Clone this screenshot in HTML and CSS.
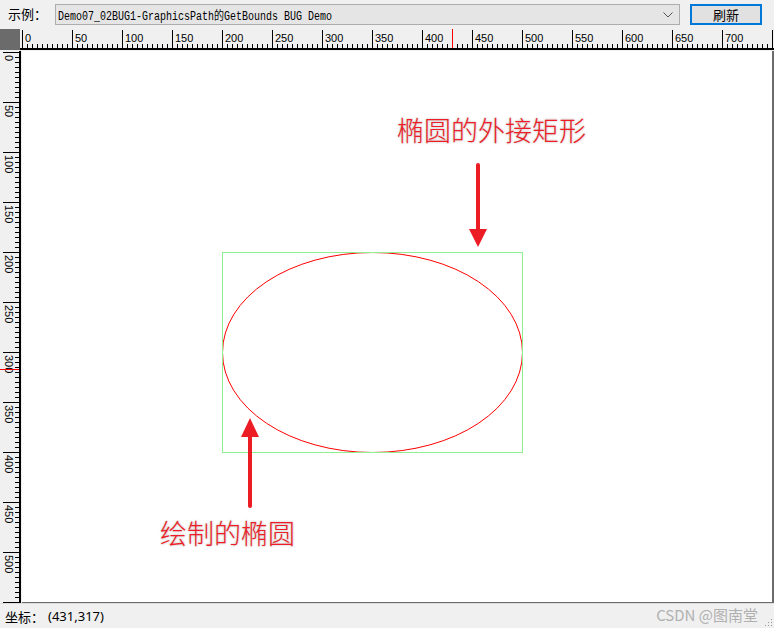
FILE: index.html
```html
<!DOCTYPE html>
<html lang="zh-CN">
<head>
<meta charset="utf-8">
<title>Demo07_02BUG1</title>
<link rel="stylesheet" href="styles.css">
</head>
<body>
<div class="app">
  <div class="toolbar">
    <span class="label">示例：</span>
    <div class="combo">
      <span class="combo-text">Demo07_02BUG1-GraphicsPath的GetBounds BUG Demo</span>
      <svg class="chev" width="10" height="6" viewBox="0 0 10 6"><path d="M0.5 0.5 L5 5 L9.5 0.5" fill="none" stroke="#555" stroke-width="1"/></svg>
    </div>
    <button class="btn">刷新</button>
  </div>

  <div class="ruler-row">
    <div class="corner"></div>
    <svg class="hruler" width="754" height="22" viewBox="0 0 754 22">
      <defs>
        <pattern id="hs" x="2" y="0" width="5" height="22" patternUnits="userSpaceOnUse">
          <rect x="0" y="15" width="1" height="4" fill="#000"/>
        </pattern>
        <pattern id="hm" x="2" y="0" width="50" height="22" patternUnits="userSpaceOnUse">
          <rect x="0" y="1" width="1" height="18" fill="#000"/>
        </pattern>
      </defs>
      <rect x="2" y="0" width="751" height="22" fill="url(#hs)"/>
      <rect x="2" y="0" width="751" height="22" fill="url(#hm)"/>
      <rect x="0" y="19" width="754" height="2" fill="#000"/>
      <g class="rtext">
        <text x="5" y="13">0</text>
        <text x="55" y="13">50</text>
        <text x="105" y="13">100</text>
        <text x="155" y="13">150</text>
        <text x="205" y="13">200</text>
        <text x="255" y="13">250</text>
        <text x="305" y="13">300</text>
        <text x="355" y="13">350</text>
        <text x="405" y="13">400</text>
        <text x="455" y="13">450</text>
        <text x="505" y="13">500</text>
        <text x="555" y="13">550</text>
        <text x="605" y="13">600</text>
        <text x="655" y="13">650</text>
        <text x="705" y="13">700</text>
      </g>
      <rect x="432" y="0" width="1" height="19" fill="#ff0000"/>
    </svg>
  </div>

  <div class="main">
    <svg class="vruler" width="22" height="552" viewBox="0 0 22 552">
      <defs>
        <pattern id="vs" x="0" y="1" width="22" height="5" patternUnits="userSpaceOnUse">
          <rect x="15" y="0" width="4" height="1" fill="#000"/>
        </pattern>
        <pattern id="vm" x="0" y="1" width="22" height="50" patternUnits="userSpaceOnUse">
          <rect x="3" y="0" width="16" height="1" fill="#000"/>
        </pattern>
      </defs>
      <rect x="0" y="1" width="22" height="551" fill="url(#vs)"/>
      <rect x="0" y="1" width="22" height="551" fill="url(#vm)"/>
      <rect x="19" y="0" width="2" height="552" fill="#000"/>
      <g class="rtext">
        <text transform="translate(5 4) rotate(90)">0</text>
        <text transform="translate(5 54) rotate(90)">50</text>
        <text transform="translate(5 104) rotate(90)">100</text>
        <text transform="translate(5 154) rotate(90)">150</text>
        <text transform="translate(5 204) rotate(90)">200</text>
        <text transform="translate(5 254) rotate(90)">250</text>
        <text transform="translate(5 304) rotate(90)">300</text>
        <text transform="translate(5 354) rotate(90)">350</text>
        <text transform="translate(5 404) rotate(90)">400</text>
        <text transform="translate(5 454) rotate(90)">450</text>
        <text transform="translate(5 504) rotate(90)">500</text>
      </g>
      <rect x="0" y="318" width="19" height="1" fill="#ff0000"/>
    </svg>

    <div class="canvas">
      <svg class="drawing" width="750" height="551" viewBox="0 0 750 551">
        <ellipse cx="350.5" cy="301.5" rx="150" ry="100" fill="none" stroke="#ff0000" stroke-width="1"/>
        <rect x="200.5" y="201.5" width="300" height="200" fill="none" stroke="#90ee90" stroke-width="1"/>
        <path d="M150 201.5 H180 M320 201.5 H375 M320 401.5 H375 M200.5 270 V330 M500.5 270 V330" stroke="none"/>
        <line x1="456" y1="114" x2="456" y2="182" stroke="#ec1c24" stroke-width="4" stroke-linecap="round"/>
        <path d="M447 178 L465 178 L456 196 Z" fill="#ec1c24"/>
        <line x1="228" y1="455" x2="228" y2="382" stroke="#ec1c24" stroke-width="4" stroke-linecap="round"/>
        <path d="M219 386 L237 386 L228 367 Z" fill="#ec1c24"/>
      </svg>
      <div class="note note-rect">椭圆的外接矩形</div>
      <div class="note note-ellipse">绘制的椭圆</div>
    </div>
  </div>

  <div class="status">
    <span class="st-label">坐标：</span>
    <span class="st-value">(431,317)</span>
    <span class="watermark">CSDN @图南堂</span>
    <svg class="grip" width="10" height="10" viewBox="0 0 10 10">
      <rect x="8" y="2" width="1" height="1" fill="#999"/>
      <rect x="5" y="5" width="1" height="1" fill="#999"/>
      <rect x="8" y="5" width="1" height="1" fill="#999"/>
      <rect x="2" y="8" width="1" height="1" fill="#999"/>
      <rect x="5" y="8" width="1" height="1" fill="#999"/>
      <rect x="8" y="8" width="1" height="1" fill="#999"/>
    </svg>
  </div>
</div>
</body>
</html>
```

FILE: styles.css
```css
html, body {
  margin: 0;
  padding: 0;
}
body {
  width: 774px;
  height: 628px;
  overflow: hidden;
  background: #f0f0f0;
  font-family: "Noto Sans CJK SC", "Noto Sans", sans-serif;
  font-size: 13px;
  color: #000;
}
.app {
  display: flex;
  flex-direction: column;
  width: 774px;
  height: 628px;
}
.toolbar {
  height: 29px;
  display: flex;
  align-items: flex-start;
  box-sizing: border-box;
  padding-top: 4px;
}
.label {
  width: 47px;
  padding-left: 8px;
  line-height: 20px;
  font-size: 13px;
  white-space: nowrap;
  overflow: hidden;
}
.combo {
  width: 625px;
  height: 21px;
  box-sizing: border-box;
  border: 1px solid #adadad;
  background: #e5e5e5;
  display: flex;
  align-items: center;
  justify-content: space-between;
  padding: 0 6px 0 2px;
}
.combo-text {
  font-family: "Liberation Mono", "Noto Sans CJK SC", monospace;
  font-size: 10px;
  color: #000;
  white-space: nowrap;
  display: inline-block;
  transform: scaleY(1.2);
}
.chev {
  display: block;
}
.btn {
  margin-left: 10px;
  width: 72px;
  height: 21px;
  box-sizing: border-box;
  border: 2px solid #0078d7;
  background: #e1e1e1;
  font-family: "Noto Sans CJK SC", sans-serif;
  font-size: 13px;
  line-height: 15px;
  padding: 0;
  color: #000;
}
.ruler-row {
  display: flex;
  height: 22px;
}
.corner {
  width: 20px;
  height: 21px;
  background: #6b6b6b;
}
.hruler, .vruler {
  display: block;
}
.rtext text {
  font-family: "Liberation Sans", Arial, sans-serif;
  font-size: 11px;
  fill: #000;
}
.main {
  display: flex;
  height: 552px;
}
.canvas {
  position: relative;
  width: 750px;
  height: 551px;
  background: #fff;
  border-bottom: 1px solid #6b6b6b;
  border-right: 2px solid #6b6b6b;
}
.drawing {
  position: absolute;
  left: 0;
  top: 0;
  display: block;
}
.note {
  position: absolute;
  font-family: "Noto Sans CJK SC", sans-serif;
  font-size: 27px;
  line-height: 30px;
  font-weight: 300;
  color: #ee1d27;
  white-space: nowrap;
  text-shadow: 0 0 2px #bbb, 0 0 3px #ddd;
}
.note-rect {
  left: 375px;
  top: 64px;
}
.note-ellipse {
  left: 138px;
  top: 467px;
}
.status {
  position: relative;
  flex: 1;
  display: flex;
  align-items: center;
  border-top: 1px solid #dcdcdc;
  font-size: 13px;
}
.st-label {
  margin-left: 5px;
  width: 43px;
  white-space: nowrap;
  overflow: hidden;
}
.st-value {
  font-family: "Noto Sans", sans-serif;
  font-size: 13px;
}
.watermark {
  position: absolute;
  right: 16px;
  top: 0;
  font-family: "Noto Sans CJK SC", sans-serif;
  font-size: 15px;
  color: #b0b0b0;
}
.grip {
  position: absolute;
  right: 1px;
  bottom: 1px;
}
```
